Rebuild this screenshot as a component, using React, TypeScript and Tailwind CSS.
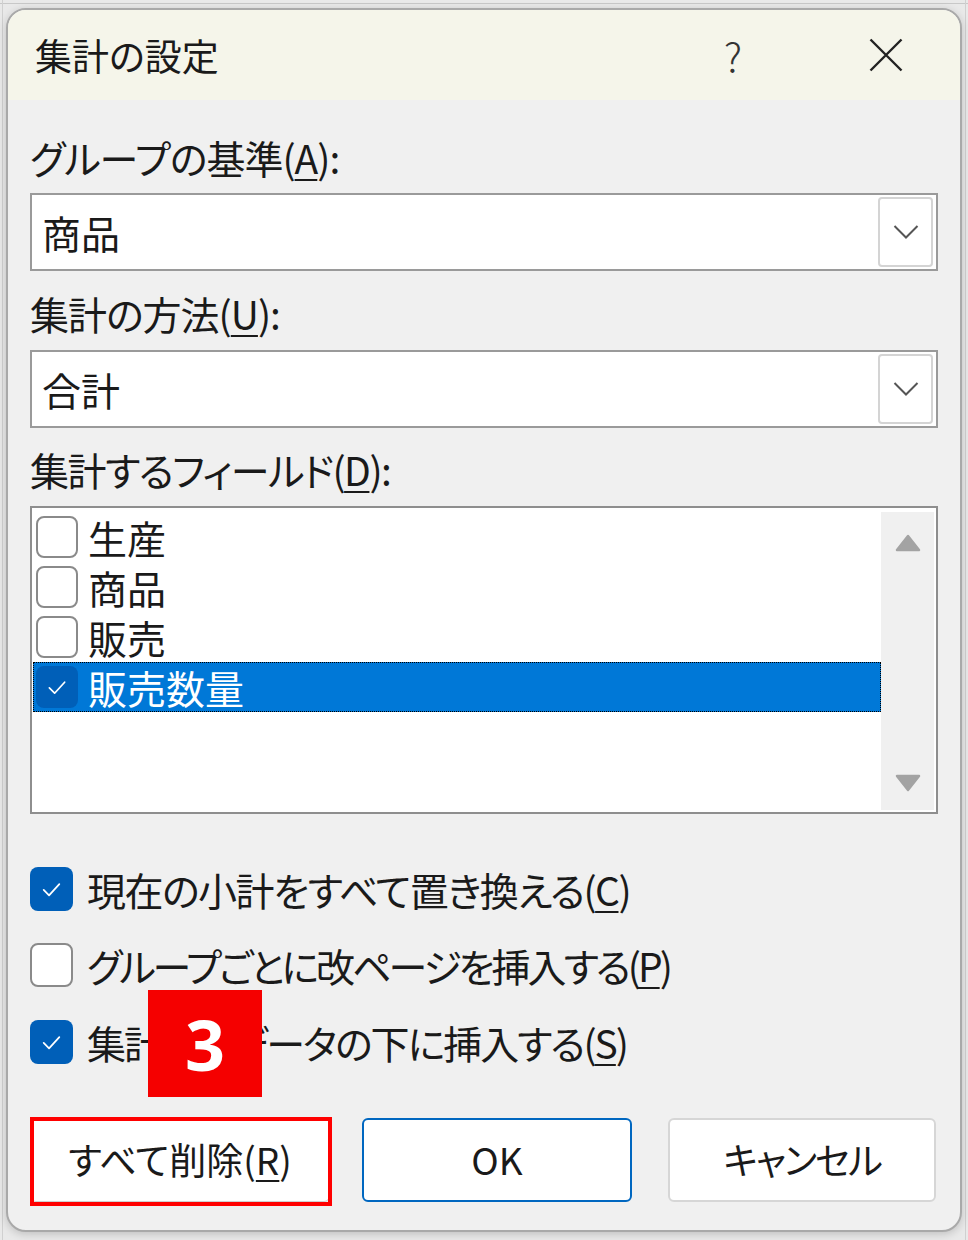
import React from "react";

const Check = ({ className = "" }: { className?: string }) => (
  <svg viewBox="0 0 44 44" className={className} fill="none">
    <polyline points="14,23 19.5,28.5 30,17" stroke="#fff" strokeWidth="1.8" strokeLinecap="round" strokeLinejoin="round" />
  </svg>
);

function Box({ checked, size = "w-[43px] h-[44px]" }: { checked: boolean; size?: string }) {
  if (checked) {
    return (
      <div className={`${size} shrink-0 rounded-[8px] bg-[#005fb8] flex items-center justify-center`}>
        <Check className="w-full h-full" />
      </div>
    );
  }
  return <div className={`${size} shrink-0 rounded-[8px] border-2 border-[#8a8a8a] bg-white`} />;
}

const Key = ({ k }: { k: string }) => <span className="underline underline-offset-[5px] decoration-[2px]">{k}</span>;

function Combo({ value }: { value: string }) {
  return (
    <div className="h-[78px] border-2 border-[#9a9a9a] bg-white flex items-center pl-[10px] pr-[3px]">
      <span className="flex-1 text-[39px] leading-[44px]">{value}</span>
      <div className="w-[55px] h-[70px] border-2 border-[#d4d4d4] rounded-[4px] bg-white flex items-center justify-center">
        <svg width="26" height="16" viewBox="0 0 26 16" fill="none">
          <polyline points="1.5,2 13,13.5 24.5,2" stroke="#555" strokeWidth="2" />
        </svg>
      </div>
    </div>
  );
}

const fields = [
  { name: "生産", checked: false },
  { name: "商品", checked: false },
  { name: "販売", checked: false },
  { name: "販売数量", checked: true, selected: true },
];

export default function App() {
  return (
    <div className="relative w-[968px] h-[1240px] bg-[#e9e9e9] overflow-hidden text-[#1a1a1a] font-['Noto_Sans_CJK_JP',sans-serif] [font-feature-settings:'palt']">
      {/* grid lines of the sheet behind */}
      <div className="absolute left-0 right-0 top-[3px] h-[1px] bg-[#c8c8c8]" />
      <div className="absolute top-0 bottom-0 left-[2px] w-[1px] bg-[#d0d0d0]" />
      <div className="absolute top-0 bottom-0 right-[2px] w-[1px] bg-[#d0d0d0]" />

      <div className="absolute left-[6px] top-[8px] w-[956px] h-[1224px] rounded-[20px] border-2 border-[#a9a9a9] bg-[#f0f0f0] overflow-hidden shadow-[0_2px_8px_rgba(0,0,0,0.18)]">
        {/* title bar */}
        <div className="h-[90px] bg-[#f5f5ea] flex items-center pl-[27px]">
          <span className="text-[37px] leading-[44px]">集計の設定</span>
          <span className="ml-auto w-[60px] text-center text-[40px] font-light leading-[44px] text-[#333]">?</span>
          <div className="ml-[93px] mr-[44px] w-[60px] flex items-center justify-center">
            <svg width="34" height="34" viewBox="0 0 34 34">
              <path d="M1.5 1.5 L32.5 32.5 M32.5 1.5 L1.5 32.5" stroke="#222" strokeWidth="2.4" />
            </svg>
          </div>
        </div>

        {/* body */}
        <div className="px-[22px] text-[39px]">
          <div className="mt-[35px] leading-[44px] tracking-[-1px]">
            グループの基準(<Key k="A" />):
          </div>
          <div className="mt-[14px]">
            <Combo value="商品" />
          </div>

          <div className="mt-[20px] leading-[44px] tracking-[-1px]">
            集計の方法(<Key k="U" />):
          </div>
          <div className="mt-[15px]">
            <Combo value="合計" />
          </div>

          <div className="mt-[19px] leading-[44px] tracking-[-1.5px]">
            集計するフィールド(<Key k="D" />):
          </div>
          <div className="mt-[15px] h-[308px] border-2 border-[#8e8e8e] bg-white flex">
            <div className="flex-1 pl-[1px] pt-[4px]">
              {fields.map((f) => (
                <div
                  key={f.name}
                  className={`h-[50px] flex items-center ${
                    f.selected ? "bg-[#0078d7] text-white border border-dotted border-black" : "border border-transparent"
                  }`}
                >
                  <div className="ml-[2px]">
                    <Box checked={f.checked} size="w-[42px] h-[42px]" />
                  </div>
                  <span className="ml-[10px] leading-[40px]">{f.name}</span>
                </div>
              ))}
            </div>
            <div className="w-[53px] mr-[2px] my-[4px] mb-[2px] bg-[#f0f0f0] flex flex-col items-center justify-between py-[22px] pb-[18px]">
              <svg width="26" height="18" viewBox="0 0 26 18">
                <polygon points="13,2 24,16 2,16" fill="#a3a3a3" stroke="#a3a3a3" strokeWidth="2.5" strokeLinejoin="round" />
              </svg>
              <svg width="26" height="18" viewBox="0 0 26 18">
                <polygon points="2,2 24,2 13,16" fill="#a3a3a3" stroke="#a3a3a3" strokeWidth="2.5" strokeLinejoin="round" />
              </svg>
            </div>
          </div>

          <div className="mt-[53px] flex items-center h-[44px]">
            <Box checked />
            <span className="ml-[14px] leading-[44px] tracking-[-1.5px]">
              現在の小計をすべて置き換える(<Key k="C" />)
            </span>
          </div>
          <div className="mt-[32px] flex items-center h-[44px]">
            <Box checked={false} />
            <span className="ml-[14px] leading-[44px] tracking-[-3px]">
              グループごとに改ページを挿入する(<Key k="P" />)
            </span>
          </div>
          <div className="mt-[33px] flex items-center h-[44px]">
            <Box checked />
            <span className="ml-[14px] leading-[44px] tracking-[-2px]">
              集計行をデータの下に挿入する(<Key k="S" />)
            </span>
          </div>

          <div className="mt-[54px] flex">
            <div className="relative w-[300px] h-[84px]">
              <div className="w-full h-full rounded-[6px] border border-[#d0d0d0] bg-white flex items-center justify-center text-[37px]">
                すべて削除(<Key k="R" />)
              </div>
              <div className="absolute -top-[1px] -bottom-[4px] left-0 -right-[2px] border-4 border-[#ff0000]" />
            </div>
            <div className="ml-[32px] w-[270px] h-[84px] rounded-[6px] border-2 border-[#0067c0] bg-white flex items-center justify-center text-[37px]">
              OK
            </div>
            <div className="ml-[36px] w-[268px] h-[84px] rounded-[6px] border-2 border-[#d6d6d6] bg-white flex items-center justify-center text-[37px] tracking-[-2px]">
              キャンセル
            </div>
          </div>
        </div>
      </div>

      {/* step badge */}
      <div className="absolute left-[148px] top-[990px] w-[114px] h-[107px] bg-[#f50000] flex items-center justify-center text-white text-[70px] font-bold leading-none font-['Noto_Sans',sans-serif]">
        3
      </div>
    </div>
  );
}
